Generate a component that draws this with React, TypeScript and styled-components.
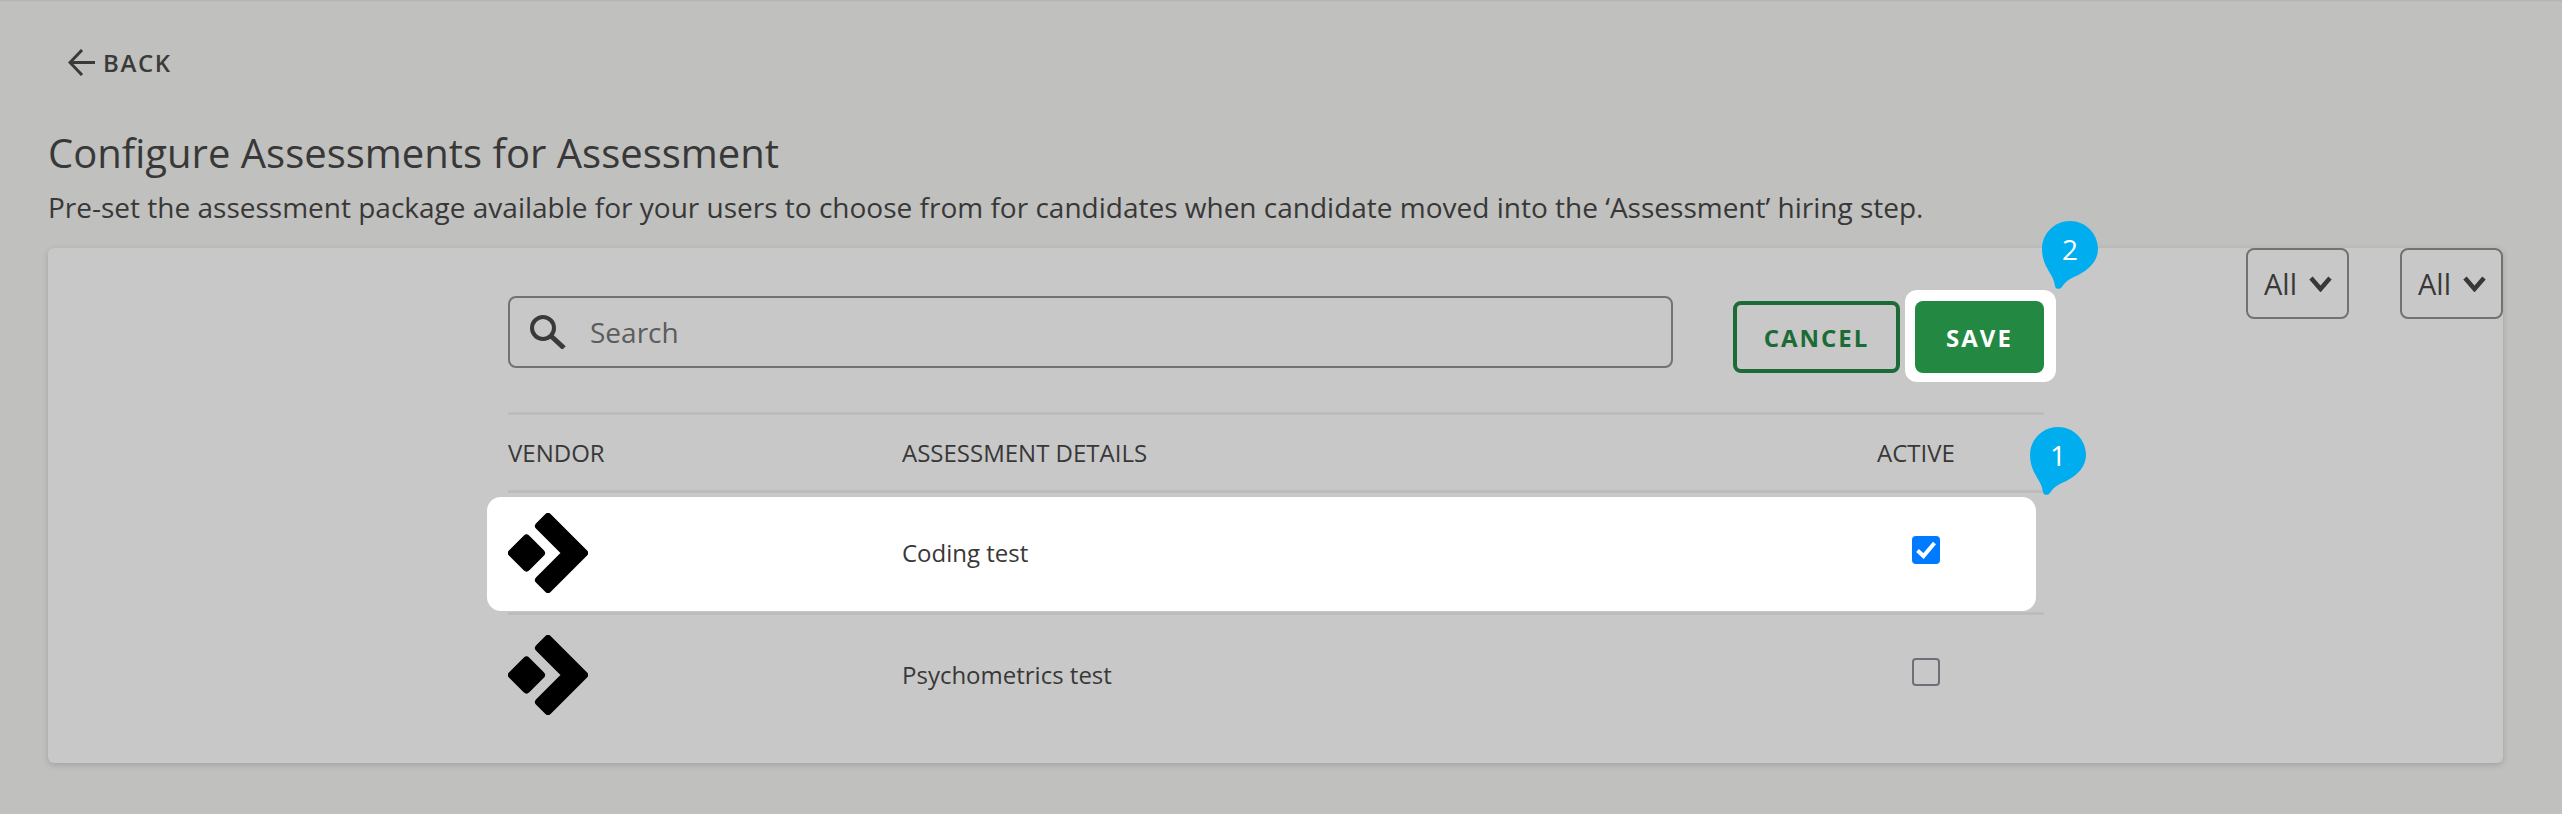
import React from 'react'
import styled, { createGlobalStyle } from 'styled-components'

const GlobalStyle = createGlobalStyle`
  html, body {
    margin: 0;
    padding: 0;
    background: #c0c0be;
  }
  * {
    box-sizing: border-box;
  }
`

const Page = styled.div`
  width: 2562px;
  height: 814px;
  overflow: hidden;
  padding: 49px 59px 0 48px;
  font-family: 'Open Sans', 'Liberation Sans', sans-serif;
  color: #383838;
  box-shadow: inset 0 2px 2px -1px rgba(0, 0, 0, 0.08);
`

const BackLink = styled.a`
  display: flex;
  align-items: center;
  gap: 8px;
  height: 26px;
  margin-left: 20px;
  font-size: 24px;
  font-weight: 600;
  letter-spacing: 1.6px;
  color: #3a3a3a;
`

const Title = styled.h1`
  margin: 50px 0 0;
  font-size: 40px;
  line-height: 56px;
  font-weight: 400;
  color: #383838;
`

const Subtitle = styled.p`
  margin: 8px 0 0;
  font-size: 28px;
  line-height: 36px;
  color: #383838;
`

const Card = styled.section`
  display: flex;
  justify-content: space-between;
  height: 515px;
  margin-top: 23px;
  padding-left: 460px;
  background: #c8c8c8;
  border-radius: 6px;
  box-shadow: 0 2px 6px rgba(0, 0, 0, 0.16);
`

const Content = styled.div`
  width: 1536px;
  padding-top: 48px;
`

const Toolbar = styled.div`
  display: flex;
  align-items: flex-start;
  height: 119px;
  border-bottom: 3px solid #bcbcbc;
`

const SearchBox = styled.div`
  display: flex;
  align-items: center;
  gap: 24px;
  width: 1165px;
  height: 72px;
  padding-left: 20px;
  border: 2px solid #727272;
  border-radius: 8px;
`

const SearchText = styled.span`
  font-size: 28px;
  color: #5c5c5c;
`

const BaseButton = styled.button`
  height: 72px;
  margin-top: 5px;
  border-radius: 8px;
  font-family: inherit;
  font-size: 24px;
  font-weight: 700;
  letter-spacing: 2px;
`

const CancelButton = styled(BaseButton)`
  width: 167px;
  margin-left: 60px;
  background: transparent;
  border: 4px solid #1c6b36;
  color: #1c6b36;
`

const SaveSpot = styled.div`
  position: relative;
  margin-left: 15px;
  z-index: 0;

  &::before {
    content: '';
    position: absolute;
    z-index: -1;
    top: -6px;
    bottom: -9px;
    left: -10px;
    right: -12px;
    background: #fff;
    border-radius: 12px;
  }
`

const SaveButton = styled(BaseButton)`
  display: block;
  width: 129px;
  border: 0;
  background: #238842;
  color: #fff;
`

const TableRow = styled.div<{ $header?: boolean; $spot?: boolean }>`
  position: relative;
  z-index: 0;
  display: grid;
  grid-template-columns: 394px 975px 1fr;
  align-items: center;
  height: ${({ $header }) => ($header ? '78px' : '122px')};
  border-bottom: 3px solid ${({ $header, $spot }) => ($header || $spot ? '#bcbcbc' : 'transparent')};
  font-size: 24px;

  ${({ $spot }) =>
    $spot &&
    `
    &::before {
      content: '';
      position: absolute;
      z-index: -1;
      top: 4px;
      bottom: 1px;
      left: -21px;
      right: 8px;
      background: #fff;
      border-radius: 14px;
    }
  `}
`

const Cell = styled.div`
  color: #383838;
`

const CheckCell = styled.div`
  display: flex;
  padding-left: 35px;
  margin-top: -5px;
`

const CheckBox = styled.span<{ $on?: boolean }>`
  display: flex;
  align-items: center;
  justify-content: center;
  width: 28px;
  height: 28px;
  border-radius: 4px;
  border: ${({ $on }) => ($on ? '0' : '2px solid #6f6f78')};
  background: ${({ $on }) => ($on ? '#007bff' : 'transparent')};
`

const Filters = styled.div`
  display: flex;
  align-items: flex-start;
  gap: 51px;
`

const FilterSelect = styled.div`
  display: flex;
  align-items: center;
  gap: 12px;
  width: 103px;
  height: 71px;
  padding-left: 16px;
  border: 2px solid #727272;
  border-radius: 8px;
  font-size: 29px;
  color: #383838;
`

const Pin = styled.div<{ $left: number; $top: number }>`
  position: absolute;
  left: ${({ $left }) => $left}px;
  top: ${({ $top }) => $top}px;
  width: 56px;
  height: 68px;
  z-index: 2;
`

const PinNumber = styled.span`
  position: absolute;
  left: 0;
  top: 0;
  width: 56px;
  height: 56px;
  line-height: 56px;
  text-align: center;
  font-size: 28px;
  color: #fff;
`

function PinMark({ n, left, top }: { n: number; left: number; top: number }) {
  return (
    <Pin $left={left} $top={top}>
      <svg width="56" height="68" viewBox="0 0 56 68">
        <path
          d="M28 0C43.5 0 56 12.5 56 28C56 40 47 48 38 53C31 57 25 58 19.5 66.5C18 68.5 13.5 68.5 13 65C12 57 8 53 4 45C1.5 40 0 34 0 28C0 12.5 12.5 0 28 0Z"
          fill="#00aeef"
        />
      </svg>
      <PinNumber>{n}</PinNumber>
    </Pin>
  )
}

function VendorLogo() {
  return (
    <svg width="80" height="80" viewBox="0 0 80 80" style={{ display: 'block' }}>
      <g fill="#000" stroke="#000" strokeWidth="8" strokeLinejoin="round">
        <path d="M4 40L18.5 25.5L33 40L18.5 54.5Z" />
        <path d="M40 4L76 40L40 76L31 67L58 40L31 13Z" />
      </g>
    </svg>
  )
}

function BackArrow() {
  return (
    <svg width="27" height="27" viewBox="0 0 27 27" fill="none" stroke="#3a3a3a" strokeWidth="3">
      <path d="M14 1L2 13.5L14 26M2 13.5H27" />
    </svg>
  )
}

function SearchIcon() {
  return (
    <svg width="36" height="34" viewBox="0 0 36 34" fill="none" stroke="#3a3a3a">
      <circle cx="13" cy="13" r="11" strokeWidth="4" />
      <path d="M21 21L34 33" strokeWidth="5" />
    </svg>
  )
}

function Chevron() {
  return (
    <svg width="23" height="16" viewBox="0 0 23 16" fill="none" stroke="#383838" strokeWidth="4.5">
      <path d="M2 2L11.5 13L21 2" />
    </svg>
  )
}

function Check() {
  return (
    <svg width="20" height="18" viewBox="0 0 20 18" fill="none" stroke="#fff" strokeWidth="4">
      <path d="M1.5 9.5L7.5 15L18.5 2" />
    </svg>
  )
}

export default function App() {
  return (
    <Page>
      <GlobalStyle />
      <BackLink>
        <BackArrow />
        BACK
      </BackLink>
      <Title>Configure Assessments for Assessment</Title>
      <Subtitle>
        Pre-set the assessment package available for your users to choose from for candidates when candidate moved into
        the ‘Assessment’ hiring step.
      </Subtitle>
      <Card>
        <Content>
          <Toolbar>
            <SearchBox>
              <SearchIcon />
              <SearchText>Search</SearchText>
            </SearchBox>
            <CancelButton>CANCEL</CancelButton>
            <SaveSpot>
              <SaveButton>SAVE</SaveButton>
              <PinMark n={2} left={127} top={-75} />
            </SaveSpot>
          </Toolbar>
          <TableRow $header>
            <Cell>VENDOR</Cell>
            <Cell>ASSESSMENT DETAILS</Cell>
            <Cell>ACTIVE</Cell>
            <PinMark n={1} left={1522} top={12} />
          </TableRow>
          <TableRow $spot>
            <VendorLogo />
            <Cell>Coding test</Cell>
            <CheckCell>
              <CheckBox $on>
                <Check />
              </CheckBox>
            </CheckCell>
          </TableRow>
          <TableRow>
            <VendorLogo />
            <Cell>Psychometrics test</Cell>
            <CheckCell>
              <CheckBox />
            </CheckCell>
          </TableRow>
        </Content>
        <Filters>
          <FilterSelect>
            All
            <Chevron />
          </FilterSelect>
          <FilterSelect>
            All
            <Chevron />
          </FilterSelect>
        </Filters>
      </Card>
    </Page>
  )
}
